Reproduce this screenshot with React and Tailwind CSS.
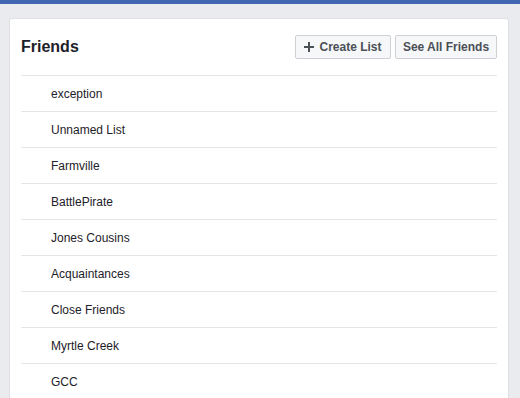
import React from "react";

const lists = [
  "exception",
  "Unnamed List",
  "Farmville",
  "BattlePirate",
  "Jones Cousins",
  "Acquaintances",
  "Close Friends",
  "Myrtle Creek",
  "GCC",
];

const HeaderButton = ({ className, children }) => (
  <button
    className={`flex items-center justify-center h-6 gap-1 bg-[#f6f7f9] border border-[#ced0d4] rounded-[2px] text-[12px] font-bold text-[#4b4f56] leading-none ${className}`}
  >
    {children}
  </button>
);

const App = () => {
  return (
    <div className="w-[520px] h-[398px] overflow-hidden bg-[#e9ebee] font-['Liberation_Sans',Arial,sans-serif]">
      <div className="h-1 bg-[#4267b2]" />
      <div className="ml-[9px] mt-[14px] w-[500px] bg-white border border-[#dddfe2] rounded-[3px] px-[11px] pt-4">
        <div className="flex items-center justify-between h-6">
          <h2 className="text-[16px] font-bold text-[#1d2129]">Friends</h2>
          <div className="flex gap-1">
            <HeaderButton className="w-[96px]">
              <svg width="10" height="10" viewBox="0 0 10 10" className="mr-[1px]">
                <path d="M5 0v10M0 5h10" stroke="#4b4f56" strokeWidth="2" />
              </svg>
              Create List
            </HeaderButton>
            <HeaderButton className="w-[102px]">See All Friends</HeaderButton>
          </div>
        </div>
        <div className="mt-4">
          {lists.map((name) => (
            <div
              key={name}
              className="h-9 flex items-center pl-[30px] border-t border-[#e5e5e5] text-[12px] text-[#1d2129]"
            >
              {name}
            </div>
          ))}
        </div>
      </div>
    </div>
  );
};

export default App;
